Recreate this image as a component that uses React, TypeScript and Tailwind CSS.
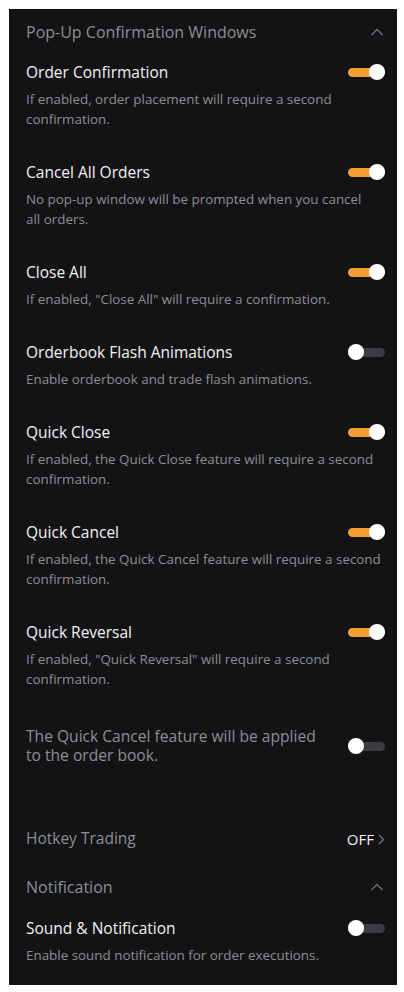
type Item = {
  title: string;
  lines: string[];
  on: boolean;
};

const ITEMS: Item[] = [
  {
    title: "Order Confirmation",
    lines: ["If enabled, order placement will require a second", "confirmation."],
    on: true
  },
  {
    title: "Cancel All Orders",
    lines: ["No pop-up window will be prompted when you cancel", "all orders."],
    on: true
  },
  {
    title: "Close All",
    lines: ['If enabled, "Close All" will require a confirmation.'],
    on: true
  },
  {
    title: "Orderbook Flash Animations",
    lines: ["Enable orderbook and trade flash animations."],
    on: false
  },
  {
    title: "Quick Close",
    lines: ["If enabled, the Quick Close feature will require a second", "confirmation."],
    on: true
  },
  {
    title: "Quick Cancel",
    lines: ["If enabled, the Quick Cancel feature will require a second", "confirmation."],
    on: true
  },
  {
    title: "Quick Reversal",
    lines: ['If enabled, "Quick Reversal" will require a second', "confirmation."],
    on: true
  }
];

function Toggle({ on }: { on: boolean }) {
  return (
    <div className="relative flex h-4 w-[37px] shrink-0 items-center">
      <div
        className={`h-[9px] w-full rounded-full ${on ? "bg-[#f39d32]" : "bg-[#3a3c40]"}`}
      />
      <div
        className={`absolute top-0 h-4 w-4 rounded-full bg-white ${on ? "right-0" : "left-0"}`}
      />
    </div>
  );
}

function ChevronUp() {
  return (
    <svg width="14" height="8" viewBox="0 0 14 8" fill="none">
      <path d="M1.5 7L7 1.5L12.5 7" stroke="#6d7076" strokeWidth="1.4" />
    </svg>
  );
}

function Row({ item, last }: { item: Item; last?: boolean }) {
  return (
    <div className={last ? "" : "mb-[31px]"}>
      <div className="flex h-[24px] items-center justify-between">
        <span className="pt-[2px] text-[15.5px] font-medium text-[#f2f2f2]">{item.title}</span>
        <Toggle on={item.on} />
      </div>
      <div className="mt-[5px] text-[13.4px] leading-[20px] text-[#8b8e94]">
        {item.lines.map((l) => (
          <div key={l} className="whitespace-nowrap">
            {l}
          </div>
        ))}
      </div>
    </div>
  );
}

export default function App() {
  return (
    <div
      className="min-h-screen bg-white p-[9px]"
      style={{ fontFamily: '"Open Sans", "Noto Sans", sans-serif' }}
    >
      <div className="h-[976px] w-[388px] bg-[#131316] pl-[17px] pr-[12px]">
        <div className="flex h-[46px] items-center justify-between">
          <span className="text-[16px] text-[#8b8e94]">Pop-Up Confirmation Windows</span>
          <span className="pr-[1px]">
            <ChevronUp />
          </span>
        </div>

        <div className="pt-[5px]">
          {ITEMS.map((it, i) => (
            <Row key={it.title} item={it} last={i === ITEMS.length - 1} />
          ))}
        </div>

        <div className="mt-[38px] flex items-center justify-between">
          <p className="text-[15.6px] leading-[19px] text-[#8b8e94]">
            The Quick Cancel feature will be applied
            <br />
            to the order book.
          </p>
          <Toggle on={false} />
        </div>

        <div className="mt-[50px] flex h-[48px] items-center justify-between">
          <span className="text-[15.5px] text-[#8b8e94]">Hotkey Trading</span>
          <span className="flex items-center gap-[4px]">
            <span className="text-[15px] font-medium text-[#f2f2f2]">OFF</span>
            <svg width="7" height="11" viewBox="0 0 7 11" fill="none">
              <path d="M1 1L5.5 5.5L1 10" stroke="#6d7076" strokeWidth="1.4" />
            </svg>
          </span>
        </div>

        <div className="flex h-[48px] items-center justify-between">
          <span className="text-[16px] text-[#8b8e94]">Notification</span>
          <span className="pr-[1px]">
            <ChevronUp />
          </span>
        </div>

        <div className="mt-[5px]">
          <Row
            item={{
              title: "Sound & Notification",
              lines: ["Enable sound notification for order executions."],
              on: false
            }}
            last
          />
        </div>
      </div>
    </div>
  );
}
